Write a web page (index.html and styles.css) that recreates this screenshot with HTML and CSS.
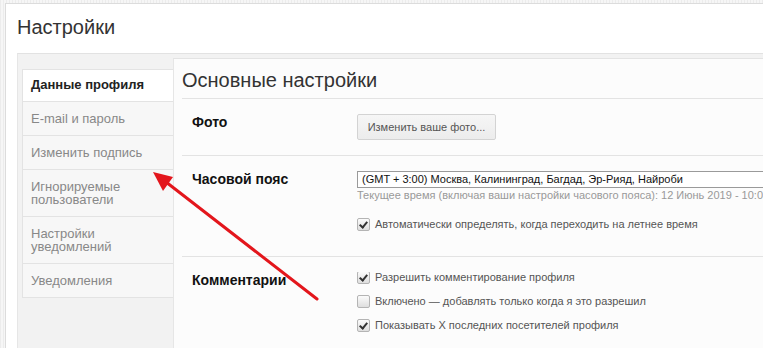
FILE: index.html
```html
<!DOCTYPE html>
<html lang="ru">
<head>
    <meta charset="UTF-8">
    <title>Настройки</title>
    <link rel="stylesheet" href="styles.css">
</head>
<body>
    <div class="frame">
        <h1 class="page-title">Настройки</h1>

        <div class="settings">
            <ul class="tabs">
                <li class="active">Данные профиля</li>
                <li>E-mail и пароль</li>
                <li>Изменить подпись</li>
                <li>Игнорируемые пользователи</li>
                <li>Настройки уведомлений</li>
                <li>Уведомления</li>
            </ul>

            <div class="main">
                <h2 class="section-title">Основные настройки</h2>

                <div class="row">
                    <div class="label">Фото</div>
                    <div class="controls">
                        <button class="btn">Изменить ваше фото...</button>
                    </div>
                </div>

                <div class="row row-tz">
                    <div class="label">Часовой пояс</div>
                    <div class="controls">
                        <div class="select">(GMT + 3:00) Москва, Калининград, Багдад, Эр-Рияд, Найроби</div>
                        <div class="hint">Текущее время (включая ваши настройки часового пояса): 12 Июнь 2019 - 10:05</div>
                        <div class="checks">
                            <div class="check"><span class="box on"></span>Автоматически определять, когда переходить на летнее время</div>
                        </div>
                    </div>
                </div>

                <div class="row row-comments">
                    <div class="label">Комментарии</div>
                    <div class="controls">
                        <div class="checks">
                            <div class="check"><span class="box on"></span>Разрешить комментирование профиля</div>
                            <div class="check"><span class="box"></span>Включено — добавлять только когда я это разрешил</div>
                            <div class="check"><span class="box on"></span>Показывать X последних посетителей профиля</div>
                        </div>
                    </div>
                </div>
            </div>
        </div>
    </div>

    <!-- red pointer drawn on top of the screenshot -->
    <svg class="arrow" width="763" height="348" viewBox="0 0 763 348">
        <line x1="317" y1="299" x2="166" y2="182" stroke="#e3161c" stroke-width="3" stroke-linecap="round"/>
        <polygon points="153,172 173,177 163,191" fill="#e3161c"/>
    </svg>
</body>
</html>
```

FILE: styles.css
```css
html, body {
    height: 100%;
    overflow: hidden;
}
body {
    margin: 0;
    padding: 0;
    font-family: "Liberation Sans", Arial, sans-serif;
    background-color: #f6f6f6;
    background-image: repeating-linear-gradient(90deg, #ececec 0, #ececec 1px, transparent 1px, transparent 3px);
}
.frame {
    box-sizing: border-box;
    display: flex;
    flex-direction: column;
    margin: 3px 0 0 5px;
    width: calc(100% - 5px);
    height: calc(100% - 3px);
    overflow: hidden;
    background: #fff;
    border-top: 1px solid #dcdcdc;
    border-left: 1px solid #dcdcdc;
    padding-left: 11px;
}
.page-title {
    margin: 0;
    padding-top: 11px;
    margin-bottom: 14px;
    font-size: 20px;
    line-height: 24px;
    font-weight: normal;
    color: #333;
}
.settings {
    flex: 1;
    display: flex;
    align-items: stretch;
    min-height: 0;
    background: #f2f2f2;
    border-top: 1px solid #e2e2e2;
    border-left: 1px solid #e6e6e6;
    padding-top: 4px;
}
.tabs {
    list-style: none;
    margin: 11px 0 0 4px;
    padding: 0;
    width: 150px;
    flex-shrink: 0;
    align-self: flex-start;
    border-top: 1px solid #e3e3e3;
    border-left: 1px solid #e3e3e3;
}
.tabs li {
    background: #f7f7f7;
    color: #888;
    font-size: 13px;
    line-height: 13px;
    padding: 10px 8px 10px 8px;
    border-bottom: 1px solid #e3e3e3;
}
.tabs li.active {
    background: #fff;
    color: #222;
    font-weight: bold;
}
.tabs li:first-child {
    padding-top: 8px;
}
.main {
    flex: 1;
    min-width: 0;
    overflow: hidden;
    background: #fcfcfc;
    border-top: 1px solid #e3e3e3;
    border-left: 1px solid #e6e6e6;
    padding-left: 8px;
}
.section-title {
    margin: 0;
    padding: 9px 0 6px 0;
    font-size: 20px;
    line-height: 24px;
    font-weight: normal;
    color: #333;
    border-bottom: 1px solid #e3e3e3;
}
.row {
    display: flex;
    padding: 15px 0 15px 10px;
    border-bottom: 1px solid #e3e3e3;
}
.label {
    width: 165px;
    flex-shrink: 0;
    font-size: 14px;
    line-height: 16px;
    font-weight: bold;
    color: #111;
}
.controls {
    flex: 1;
    min-width: 0;
    overflow: hidden;
}
.btn {
    display: block;
    width: 139px;
    height: 26px;
    padding: 0;
    font-family: inherit;
    font-size: 11px;
    color: #555;
    background: linear-gradient(#f6f6f6, #ececec);
    border: 1px solid #d3d3d3;
    border-radius: 2px;
}
.select {
    height: 15px;
    line-height: 15px;
    border: 1px solid #9a9a9a;
    border-right: 0;
    background: #fff;
    padding: 0 4px;
    font-size: 11px;
    color: #111;
    white-space: nowrap;
}
.hint {
    font-size: 11px;
    line-height: 14px;
    color: #999;
    white-space: nowrap;
}
.row-tz .checks {
    margin: 10px 0 5px 0;
}
.row-comments .checks {
    margin-top: -7px;
}
.check {
    display: flex;
    align-items: center;
    height: 24px;
    font-size: 11px;
    color: #555;
    white-space: nowrap;
}
.box {
    width: 11px;
    height: 11px;
    margin-right: 5px;
    border: 1px solid #b4b4b4;
    border-radius: 2px;
    background: linear-gradient(#fbfbfb, #dedede);
    position: relative;
}
.box.on::after {
    content: "";
    position: absolute;
    left: 3px;
    top: 1px;
    width: 3px;
    height: 6px;
    border: solid #333;
    border-width: 0 2px 2px 0;
    transform: rotate(40deg);
}
.arrow {
    position: absolute;
    left: 0;
    top: 0;
    pointer-events: none;
}
```
